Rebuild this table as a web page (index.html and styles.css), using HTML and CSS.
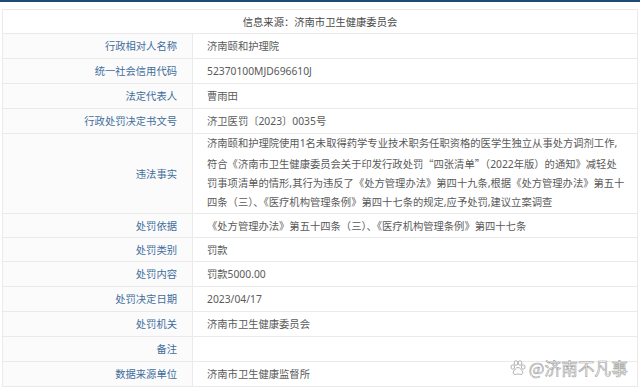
FILE: index.html
```html
<!DOCTYPE html>
<html lang="zh-CN">
<head>
<meta charset="utf-8">
<title>行政处罚信息</title>
<link rel="stylesheet" href="styles.css">
</head>
<body>
<div class="topbar"></div>
<div class="wrap">
<table class="info">
  <colgroup><col class="c-label"><col class="c-value"></colgroup>
  <tr class="head"><td colspan="2">信息来源：济南市卫生健康委员会</td></tr>
  <tr><th>行政相对人名称</th><td>济南颐和护理院</td></tr>
  <tr><th>统一社会信用代码</th><td>52370100MJD696610J</td></tr>
  <tr><th>法定代表人</th><td>曹雨田</td></tr>
  <tr><th>行政处罚决定书文号</th><td>济卫医罚〔2023〕0035号</td></tr>
  <tr class="multi"><th>违法事实</th><td class="nowrap">济南颐和护理院使用1名未取得药学专业技术职务任职资格的医学生独立从事处方调剂工作,<br>符合《济南市卫生健康委员会关于印发行政处罚<span class="fw">“</span>四张清单<span class="fw">”</span>（2022年版）的通知》减轻处<br>罚事项清单的情形,其行为违反了《处方管理办法》第四十九条,根据《处方管理办法》第五十<br>四条（三）、《医疗机构管理条例》第四十七条的规定,应予处罚,建议立案调查</td></tr>
  <tr class="short"><th>处罚依据</th><td>《处方管理办法》第五十四条（三）、《医疗机构管理条例》第四十七条</td></tr>
  <tr class="short"><th>处罚类别</th><td>罚款</td></tr>
  <tr><th>处罚内容</th><td>罚款5000.00</td></tr>
  <tr><th>处罚决定日期</th><td>2023/04/17</td></tr>
  <tr><th>处罚机关</th><td>济南市卫生健康委员会</td></tr>
  <tr><th>备注</th><td></td></tr>
  <tr><th>数据来源单位</th><td>济南市卫生健康监督所</td></tr>
</table>
<div class="watermark">
  <svg class="paw" width="16" height="16" viewBox="0 0 16 16">
    <g fill="#fff" stroke="#a8a8a8" stroke-width="0.9">
      <ellipse cx="2.8" cy="7" rx="1.8" ry="2.2"/>
      <ellipse cx="6" cy="3" rx="1.8" ry="2.3"/>
      <ellipse cx="10" cy="3" rx="1.8" ry="2.3"/>
      <ellipse cx="13.2" cy="7" rx="1.8" ry="2.2"/>
      <path d="M8 7.5c-2 0-3.2 2.2-4.3 3.6-1 1.3-.6 3.4 1.4 3.4 1.2 0 1.8-.5 2.9-.5s1.7.5 2.9.5c2 0 2.4-2.1 1.4-3.4C11.2 9.7 10 7.5 8 7.5z"/>
    </g>
  </svg>
  <span class="wm-text">@济南不凡事</span>
</div>
</div>
</body>
</html>
```
FILE: styles.css
```css
html, body {
  margin: 0;
  padding: 0;
  background: #ffffff;
}
body {
  font-family: "Noto Sans", "Noto Sans CJK SC", sans-serif;
  font-size: 10.3px;
  color: #5a5a5a;
}
.topbar {
  height: 2px;
  background: #1d4b73;
}
.wrap {
  position: relative;
  padding: 7px 3px 0 2px;
}
.info {
  width: 635px;
  border-collapse: collapse;
  border: 1px solid #e4e4e4;
  table-layout: fixed;
}
.c-label {
  width: 190px;
}
.c-value {
  width: 445px;
}
.info th,
.info td {
  border: 1px solid #eaeaea;
  padding: 0;
  height: 24px;
  line-height: 14px;
  vertical-align: middle;
  font-weight: normal;
}
.info th {
  padding-right: 15px;
  text-align: right;
  color: #3f6d9b;
  background: #fbfbfb;
}
.info td {
  padding-left: 14px;
  text-align: left;
  color: #5a5a5a;
  background: #ffffff;
}
.info .head td {
  height: 23px;
  padding-left: 0;
  text-align: center;
  color: #4a4a4a;
}
.info .short th,
.info .short td {
  height: 23px;
}
.info .multi th,
.info .multi td {
  height: 79px;
}
.info .multi td {
  line-height: 19.4px;
}
.fw {
  font-family: "Noto Sans CJK SC", sans-serif;
}
.nowrap {
  white-space: nowrap;
}
.watermark {
  position: absolute;
  right: 12px;
  bottom: 9px;
  display: flex;
  align-items: center;
  gap: 3px;
}
.wm-text {
  font-family: "Noto Sans CJK SC", sans-serif;
  font-size: 16.5px;
  line-height: 20px;
  color: #ffffff;
  -webkit-text-stroke: 0.6px #a0a0a0;
  letter-spacing: 0.2px;
}
```
